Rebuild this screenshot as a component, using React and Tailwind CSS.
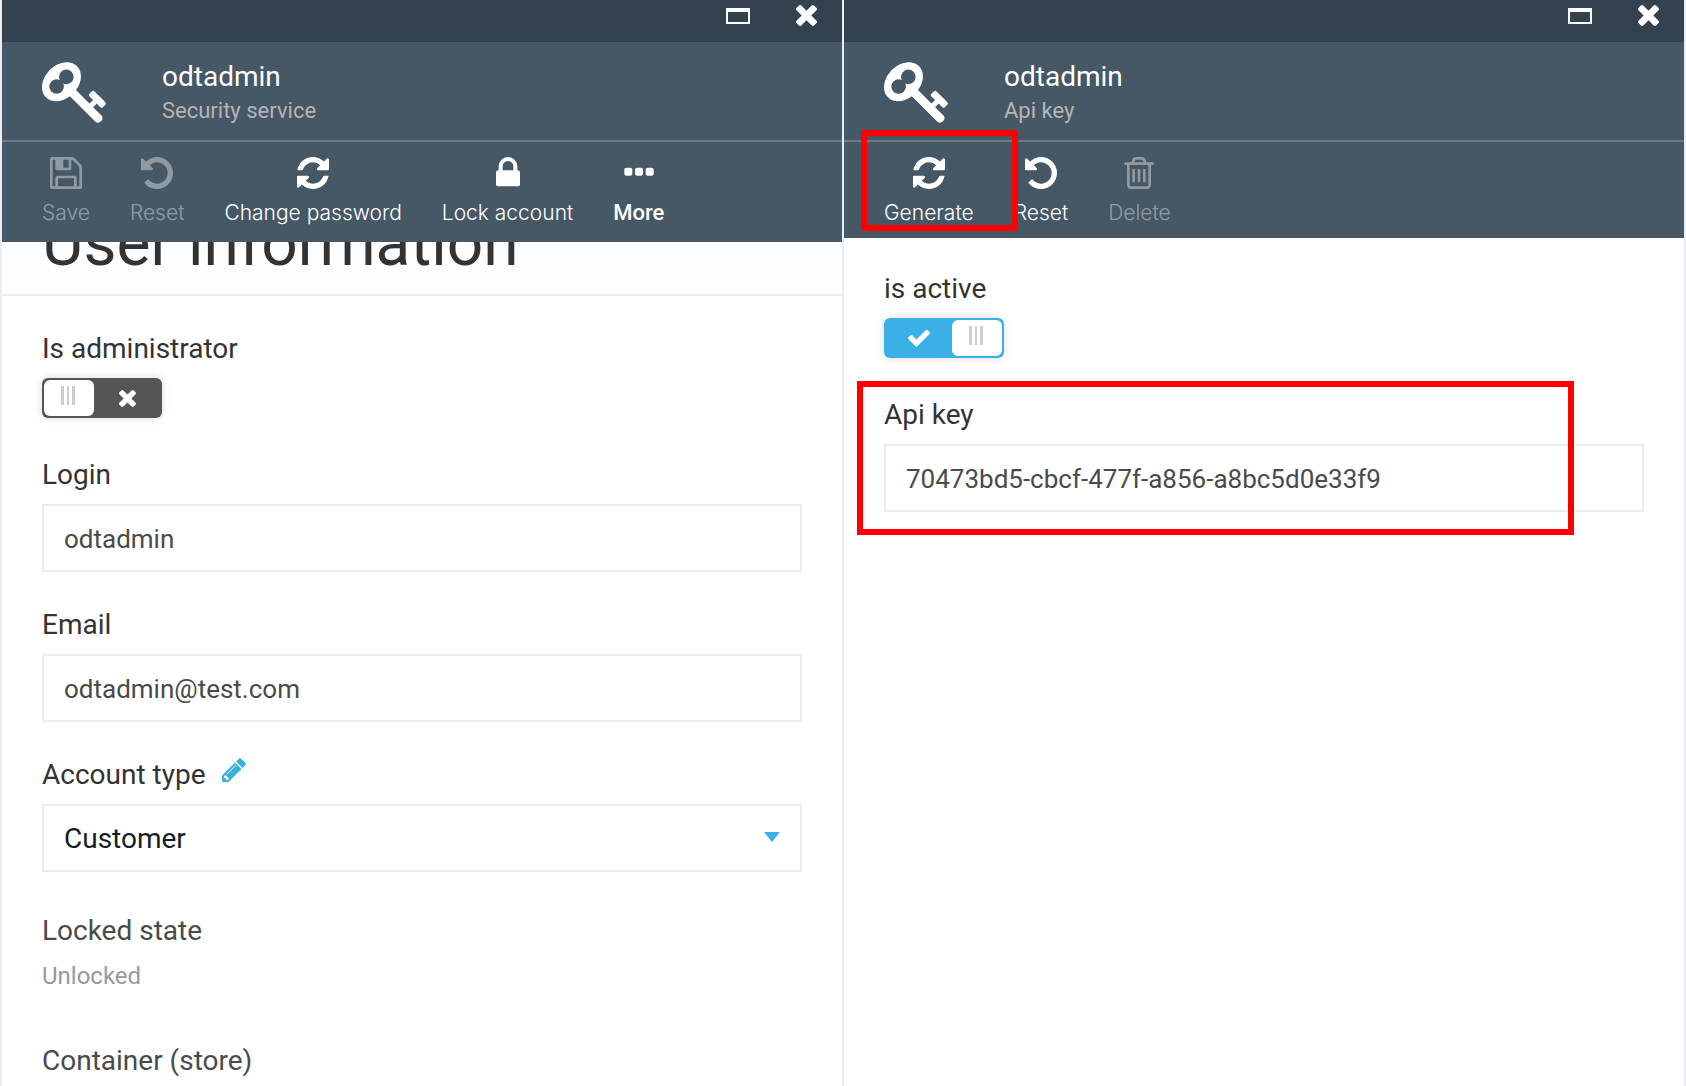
import { useId, useState } from "react";

const ICONS = {
  key: {
    box: "0 128 1683 1592",
    d: "M832 512q0-80-56-136t-136-56-136 56-56 136q0 42 19 83-41-19-83-19-80 0-136 56t-56 136 56 136 136 56 136-56 56-136q0-42-19-83 41 19 83 19 80 0 136-56t56-136zm851 704q0 17-49 66t-66 49q-9 0-28.5-16t-36.5-33-38.5-40-24.5-26l-96 96 220 220q28 28 28 68 0 42-39 81t-81 39q-40 0-68-28l-671-671q-176 131-365 131-163 0-265.5-102.5t-102.5-265.5q0-160 95-313t248-248 313-95q163 0 265.5 102.5t102.5 265.5q0 189-131 365l355 355 96-96q-3-3-26-24.5t-40-38.5-33-36.5-16-28.5q0-17 49-66t66-49q13 0 23 10 6 6 46 44.5t82 79.5 86.5 86 73 78 28.5 41z",
  },
  save: {
    box: "128 128 1536 1536",
    d: "M512 1536h768v-384h-768v384zm896 0h128v-896q0-14-10-38.5t-20-34.5l-281-281q-10-10-34-20t-39-10v416q0 40-28 68t-68 28h-576q-40 0-68-28t-28-68v-416h-128v1280h128v-416q0-40 28-68t68-28h832q40 0 68 28t28 68v416zm-384-928v-320q0-13-9.5-22.5t-22.5-9.5h-192q-13 0-22.5 9.5t-9.5 22.5v320q0 13 9.5 22.5t22.5 9.5h192q13 0 22.5-9.5t9.5-22.5zm640 32v928q0 40-28 68t-68 28h-1344q-40 0-68-28t-28-68v-1344q0-40 28-68t68-28h928q40 0 88 20t76 48l280 280q28 28 48 76t20 88z",
  },
  undo: {
    box: "128 128 1536 1536",
    d: "M1664 896q0 156-61 298t-164 245-245 164-298 61q-172 0-327-72.5t-264-204.5q-7-10-6.5-22.5t8.5-20.5l137-138q10-9 25-9 16 2 23 12 73 95 179 147t225 52q104 0 198.5-40.5t163.5-109.5 109.5-163.5 40.5-198.5-40.5-198.5-109.5-163.5-163.5-109.5-198.5-40.5q-98 0-188 35.5t-160 101.5l137 138q31 30 14 69-17 40-59 40h-448q-26 0-45-19t-19-45v-448q0-42 40-59 39-17 69 14l130 129q107-101 244.5-156.5t284.5-55.5q156 0 298 61t245 164 164 245 61 298z",
  },
  refresh: {
    box: "128 128 1536 1536",
    d: "M1639 1056q0 5-1 7-64 268-268 434.5t-478 166.5q-146 0-282.5-55t-243.5-157l-129 129q-19 19-45 19t-45-19-19-45v-448q0-26 19-45t45-19h448q26 0 45 19t19 45-19 45l-137 137q71 66 161 102t187 36q134 0 250-65t186-179q11-17 53-117 8-23 30-23h192q13 0 22.5 9.5t9.5 22.5zm25-800v448q0 26-19 45t-45 19h-448q-26 0-45-19t-19-45 19-45l138-138q-148-137-349-137-134 0-250 65t-186 179q-11 17-53 117-8 23-30 23h-199q-13 0-22.5-9.5t-9.5-22.5v-7q65-268 270-434.5t480-166.5q146 0 284 55.5t245 156.5l130-129q19-19 45-19t45 19 19 45z",
  },
  lock: {
    box: "128 128 1536 1536",
    d: "M640 768h512v-192q0-106-75-181t-181-75-181 75-75 181v192zm832 96v576q0 40-28 68t-68 28h-960q-40 0-68-28t-28-68v-576q0-40 28-68t68-28h32v-192q0-184 132-316t316-132 316 132 132 316v192h32q40 0 68 28t28 68z",
  },
  more: {
    box: "128 128 1536 1536",
    d: "M576 736v192q0 40-28 68t-68 28h-192q-40 0-68-28t-28-68v-192q0-40 28-68t68-28h192q40 0 68 28t28 68zm512 0v192q0 40-28 68t-68 28h-192q-40 0-68-28t-28-68v-192q0-40 28-68t68-28h192q40 0 68 28t28 68zm512 0v192q0 40-28 68t-68 28h-192q-40 0-68-28t-28-68v-192q0-40 28-68t68-28h192q40 0 68 28t28 68z",
  },
  trash: {
    box: "128 128 1536 1536",
    d: "M704 736v576q0 14-9 23t-23 9h-64q-14 0-23-9t-9-23v-576q0-14 9-23t23-9h64q14 0 23 9t9 23zm256 0v576q0 14-9 23t-23 9h-64q-14 0-23-9t-9-23v-576q0-14 9-23t23-9h64q14 0 23 9t9 23zm256 0v576q0 14-9 23t-23 9h-64q-14 0-23-9t-9-23v-576q0-14 9-23t23-9h64q14 0 23 9t9 23zm128 724v-948h-896v948q0 22 7 40.5t14.5 27 10.5 8.5h832q3 0 10.5-8.5t14.5-27 7-40.5zm-672-1076h448l-48-117q-7-9-17-11h-317q-10 2-17 11zm928 32v64q0 14-9 23t-23 9h-96v948q0 83-47 143.5t-113 60.5h-832q-66 0-113-58.5t-47-141.5v-952h-96q-14 0-23-9t-9-23v-64q0-14 9-23t23-9h309l70-167q15-37 54-63t79-26h320q40 0 79 26t54 63l70 167h309q14 0 23 9t9 23z",
  },
  times: {
    box: "302 366 1188 1188",
    d: "M1490 1322q0 40-28 68l-136 136q-28 28-68 28t-68-28l-294-294-294 294q-28 28-68 28t-68-28l-136-136q-28-28-28-68t28-68l294-294-294-294q-28-28-28-68t28-68l136-136q28-28 68-28t68 28l294 294 294-294q28-28 68-28t68 28l136 136q28 28 28 68t-28 68l-294 294 294 294q28 28 28 68z",
  },
  check: {
    box: "121 306 1550 1216",
    d: "M1671 566q0 40-28 68l-724 724-136 136q-28 28-68 28t-68-28l-136-136-362-362q-28-28-28-68t28-68l136-136q28-28 68-28t68 28l294 295 656-657q28-28 68-28t68 28l136 136q28 28 28 68z",
  },
  pencil: {
    box: "128 128 1536 1536",
    d: "M491 1536l91-91-235-235-91 91v107h128v128h107zm523-928q0-22-22-22-10 0-17 7l-542 542q-7 7-7 17 0 22 22 22 10 0 17-7l542-542q7-7 7-17zm-54-192l416 416-832 832h-416v-416zm683 96q0 53-37 90l-166 166-416-416 166-165q36-38 90-38 53 0 91 38l235 234q37 39 37 91z",
  },
};

function Icon({ name, className }) {
  return (
    <svg viewBox={ICONS[name].box} fill="currentColor" aria-hidden="true" className={className}>
      <path d={ICONS[name].d} />
    </svg>
  );
}

function Highlight({ className }) {
  return <span aria-hidden="true" className={`pointer-events-none absolute z-10 border-6 border-[#ff0000] ${className}`} />;
}

function Tool({ icon, label, disabled, strong, children }) {
  return (
    <li className="relative">
      <button
        type="button"
        disabled={disabled}
        className={`flex flex-col items-center gap-2.5 whitespace-nowrap leading-7 text-white disabled:opacity-40 ${
          strong ? "text-[22px] font-medium" : "font-['Inter',sans-serif] text-[21px] font-light"
        }`}
      >
        <Icon name={icon} className="size-8" />
        <span>{label}</span>
      </button>
      {children}
    </li>
  );
}

function Blade({ title, subtitle, tools, toolbarClass, children }) {
  return (
    <section className="flex min-w-0 flex-1 flex-col border-r-2 border-[#e9edf4] bg-white">
      <div className="flex h-[42px] items-start justify-end gap-[46px] bg-[#34414e] pr-[25px] text-white">
        <button type="button" aria-label="Maximize" className="mt-2 h-4 w-6 border-2 border-t-4 border-white" />
        <button type="button" aria-label="Close" className="mt-[5px]">
          <Icon name="times" className="size-[21px]" />
        </button>
      </div>
      <header className="bg-[#465766]">
        <div className="flex h-[100px] border-b-2 border-[#6b7885] px-10">
          <Icon name="key" className="mt-5 h-[61px] w-16 text-white" />
          <div className="ml-14 pt-[17px]">
            <h2 className="text-[28px] leading-9 text-white">{title}</h2>
            <p className="text-[22px] leading-8 text-[#b5b5b5]">{subtitle}</p>
          </div>
        </div>
        <ul className={`flex items-start gap-10 px-10 pt-[15px] ${toolbarClass}`}>{tools}</ul>
      </header>
      {children}
    </section>
  );
}

function Toggle({ label, initial }) {
  const id = useId();
  const [on, setOn] = useState(initial);
  return (
    <div className="flex flex-col gap-2.5">
      <label htmlFor={id} className="text-[28px] leading-[38px] text-[#333333]">{label}</label>
      <div className="h-11">
        <div className="relative h-10 w-[120px] rounded-md shadow-[0_0_8px_rgba(0,0,0,0.15)]">
          <input
            id={id}
            type="checkbox"
            checked={on}
            onChange={(e) => setOn(e.target.checked)}
            className="block h-10 w-[120px] appearance-none rounded-md bg-[#555555] checked:bg-[#3ab0e6]"
          />
          <div className={`pointer-events-none absolute inset-0 flex items-center p-0.5 ${on ? "flex-row-reverse" : ""}`}>
            <span className="flex h-9 w-[50px] justify-center gap-[3px] rounded-md bg-white pt-1.5 pr-0.5">
              <span className="h-[19px] w-[3px] bg-[#cccccc]" />
              <span className="h-[19px] w-[2px] bg-[#cccccc]" />
              <span className="h-[19px] w-[3px] bg-[#cccccc]" />
            </span>
            <span className="flex flex-1 justify-center text-white">
              <Icon name={on ? "check" : "times"} className={on ? "h-[18px] w-[22px]" : "size-[17px]"} />
            </span>
          </div>
        </div>
      </div>
    </div>
  );
}

function TextField({ label, value, children }) {
  const id = useId();
  return (
    <div className="relative flex flex-col gap-2.5">
      <label htmlFor={id} className="text-[28px] leading-[38px] text-[#333333]">{label}</label>
      <input
        id={id}
        type="text"
        defaultValue={value}
        className="h-[68px] w-full border-2 border-[#e9edf4] bg-white px-5 pt-0.5 text-[26px] text-[#4a4a4a] outline-none"
      />
      {children}
    </div>
  );
}

export default function App() {
  return (
    <main className="flex h-screen overflow-hidden border-l-2 border-[#e9edf4] bg-white font-['Roboto',sans-serif]">
      <Blade
        title="odtadmin"
        subtitle="Security service"
        toolbarClass="pb-[15px]"
        tools={
          <>
            <Tool icon="save" label="Save" disabled />
            <Tool icon="undo" label="Reset" disabled />
            <Tool icon="refresh" label="Change password" />
            <Tool icon="lock" label="Lock account" />
            <Tool icon="more" label="More" strong />
          </>
        }
      >
        <div className="flex h-[54px] shrink-0 items-end overflow-hidden border-b-2 border-[#e9edf4] bg-[#fcfdff] px-10 pb-3">
          <h1 className="text-[64px] leading-[76px] text-[#333333]">User information</h1>
        </div>
        <form className="flex flex-col gap-[34px] px-10 pt-[34px]">
          <Toggle label="Is administrator" initial={false} />
          <TextField label="Login" value="odtadmin" />
          <TextField label="Email" value="odtadmin@test.com" />
          <div className="flex flex-col gap-2.5">
            <div className="flex gap-4">
              <label htmlFor="account-type" className="text-[28px] leading-[38px] text-[#333333]">Account type</label>
              <button type="button" aria-label="Edit account types" className="flex items-start pt-0.5 text-[#3ab0e6]">
                <Icon name="pencil" className="size-6" />
              </button>
            </div>
            <div className="relative">
              <select
                id="account-type"
                defaultValue="Customer"
                className="h-[68px] w-full appearance-none border-2 border-[#e9edf4] bg-white px-5 pt-0.5 text-[28px] text-[#161d25] outline-none"
              >
                <option>Customer</option>
              </select>
              <svg viewBox="0 0 16 10" aria-hidden="true" className="pointer-events-none absolute top-7 right-[22px] h-2.5 w-4 text-[#3ab0e6]">
                <path d="M0 0h16L8 10z" fill="currentColor" />
              </svg>
            </div>
          </div>
          <dl className="flex flex-col gap-12 pt-1.5 text-[28px] leading-[38px] text-[#4a4a4a]">
            <div className="flex flex-col gap-2">
              <dt>Locked state</dt>
              <dd className="text-[24px] leading-9 text-[#999999]">Unlocked</dd>
            </div>
            <div>
              <dt>Container (store)</dt>
            </div>
          </dl>
        </form>
      </Blade>
      <Blade
        title="odtadmin"
        subtitle="Api key"
        toolbarClass="pb-[11px]"
        tools={
          <>
            <Tool icon="refresh" label="Generate">
              <Highlight className="-top-[27px] -right-11 -bottom-1 -left-[23px]" />
            </Tool>
            <Tool icon="undo" label="Reset" />
            <Tool icon="trash" label="Delete" disabled />
          </>
        }
      >
        <form className="flex flex-col gap-[34px] px-10 pt-8">
          <Toggle label="is active" initial />
          <TextField label="Api key" value="70473bd5-cbcf-477f-a856-a8bc5d0e33f9">
            <Highlight className="-top-[15px] right-[70px] -bottom-[23px] -left-[27px]" />
          </TextField>
        </form>
      </Blade>
    </main>
  );
}
